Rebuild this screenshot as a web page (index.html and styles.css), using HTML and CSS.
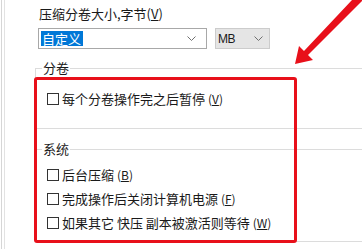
FILE: index.html
```html
<!DOCTYPE html>
<html lang="zh">
<head>
<meta charset="utf-8">
<link rel="stylesheet" href="styles.css">
</head>
<body>
<div class="page">
  <div class="inner">
    <div class="label">压缩分卷大小,字节(<u>V</u>)</div>
    <div class="combos">
      <div class="combo combo-size">
        <span class="sel">自定义</span>
        <svg class="chev" width="9" height="6" viewBox="0 0 9 6"><polyline points="0.5,0.5 4.5,4.5 8.5,0.5" fill="none" stroke="#707070" stroke-width="1"/></svg>
      </div>
      <div class="combo combo-unit">
        <span class="unit">MB</span>
        <svg class="chev" width="9" height="6" viewBox="0 0 9 6"><polyline points="0.5,0.5 4.5,4.5 8.5,0.5" fill="none" stroke="#707070" stroke-width="1"/></svg>
      </div>
    </div>
    <fieldset class="group g1">
      <legend>分卷</legend>
      <div class="check"><span class="box"></span><span>每个分卷操作完之后暂停 <span class="key">(<u>V</u>)</span></span></div>
    </fieldset>
    <fieldset class="group g2">
      <legend>系统</legend>
      <div class="check"><span class="box"></span><span>后台压缩 <span class="key">(<u>B</u>)</span></span></div>
      <div class="check"><span class="box"></span><span>完成操作后关闭计算机电源 <span class="key">(<u>F</u>)</span></span></div>
      <div class="check"><span class="box"></span><span>如果其它 快压 副本被激活则等待 <span class="key">(<u>W</u>)</span></span></div>
    </fieldset>
  </div>
  <div class="highlight"></div>
  <svg class="arrow" width="362" height="249" viewBox="0 0 362 249">
    <polygon points="295,64 299,46 304,51 352,0 362,0 362,1 308,55 313,60" fill="#e8101a"/>
  </svg>
</div>
</body>
</html>
```
FILE: styles.css
```css
html, body {
  margin: 0;
  padding: 0;
  background: #ffffff;
}
body {
  font-family: "Noto Sans CJK SC", "Noto Sans", sans-serif;
  font-size: 13px;
  line-height: 16px;
  color: #1a1a1a;
}
.page {
  position: relative;
  width: 361px;
  height: 249px;
  overflow: hidden;
  margin-left: 1px;
  border-left: 1px solid #d6d6d6;
  box-sizing: border-box;
}
.inner {
  margin-left: 2px;
  border-left: 1px solid #e2e2e2;
  padding-left: 30px;
  padding-top: 6px;
  height: 249px;
  box-sizing: border-box;
}
.label {
  margin-left: 4px;
  height: 16px;
}
.combos {
  display: flex;
  gap: 8px;
  margin-top: 6px;
  margin-left: 3px;
}
.combo {
  position: relative;
  height: 21px;
  box-sizing: border-box;
  display: flex;
  align-items: center;
}
.combo-size {
  width: 169px;
  border: 1px solid #a8a8a8;
  background: #fff;
  padding-left: 2px;
}
.sel {
  background: #0078d7;
  color: #fff;
  height: 15px;
  line-height: 15px;
  padding: 0 2px 0 1px;
}
.combo-size .chev {
  position: absolute;
  right: 10px;
  top: 7px;
}
.combo-unit {
  width: 55px;
  border: 1px solid #cccccc;
  background: #e5e5e5;
  padding-left: 2px;
}
.unit {
  font-family: "Liberation Sans", Arial, sans-serif;
  font-size: 12px;
  color: #1a1a1a;
  letter-spacing: -0.5px;
}
.combo-unit .chev {
  position: absolute;
  right: 6px;
  top: 7px;
}
.group {
  margin: 0;
  width: 420px;
  border: 1px solid #dcdcdc;
  border-right: none;
  padding: 0 6px;
  box-sizing: border-box;
}
.group legend {
  padding: 0 1px;
  line-height: 16px;
  height: 16px;
}
.g1 {
  margin-top: 11px;
  padding-top: 15px;
  padding-bottom: 21px;
}
.g2 {
  margin-top: 12px;
  padding-top: 10px;
  padding-bottom: 10px;
}
.check {
  display: flex;
  align-items: center;
  gap: 3px;
  height: 16px;
  margin-left: 5px;
}
.g2 .check + .check {
  margin-top: 8px;
}
.box {
  width: 12px;
  height: 12px;
  box-sizing: border-box;
  border: 1px solid #333333;
  background: #fff;
  flex: none;
}
.key {
  font-size: 12px;
}
.highlight {
  position: absolute;
  left: 32px;
  top: 77px;
  width: 263px;
  height: 166px;
  border: 3px solid #e8101a;
  border-radius: 3px;
  box-sizing: border-box;
}
.arrow {
  position: absolute;
  left: -2px;
  top: 0;
}
```
